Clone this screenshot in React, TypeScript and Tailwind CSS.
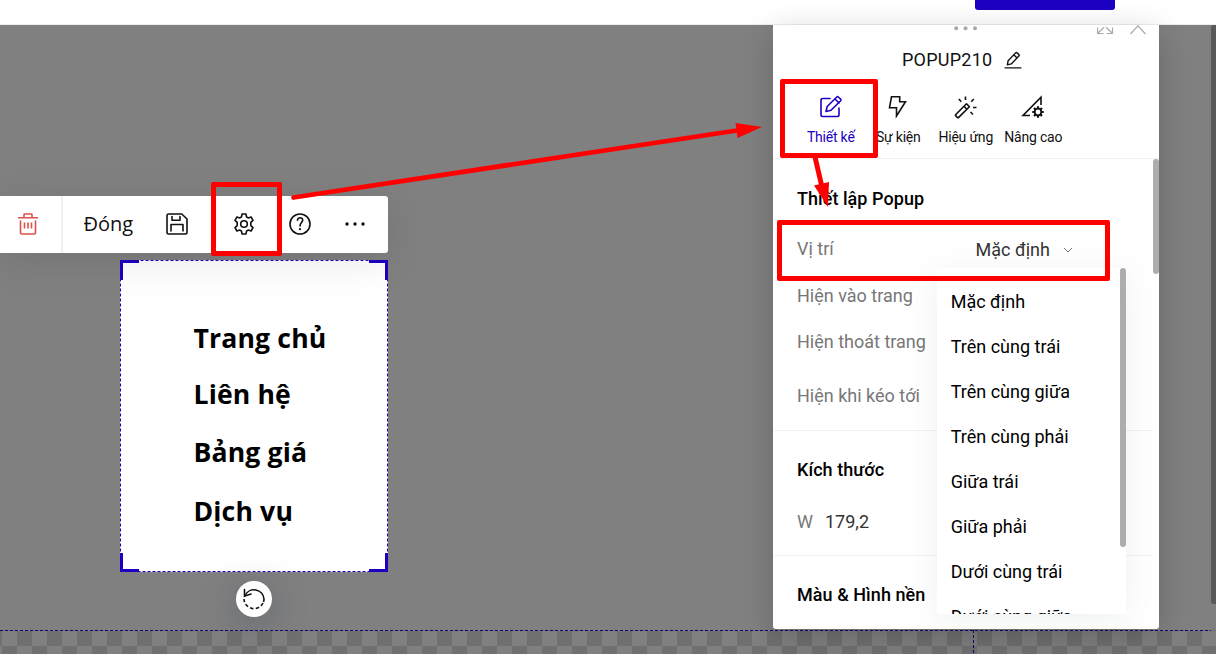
import React from "react";

type IconProps = { className?: string; children: React.ReactNode; box?: string };

function Icon({ className = "", children, box = "0 0 24 24" }: IconProps) {
  return (
    <svg viewBox={box} fill="none" stroke="currentColor" strokeWidth="1.6" strokeLinecap="round" strokeLinejoin="round" className={"shrink-0 " + className}>
      {children}
    </svg>
  );
}

const TrashIcon = () => (
  <Icon className="h-6 w-6 text-[#d9534a]">
    <path d="M2 5.800h20M8 5.500V2.600Q8 2 8.600 2h6.800q.6 0 .6.6v2.900M4.500 8.500v11.800q0 1.700 1.700 1.700h11.600q1.700 0 1.700-1.700V8.500M8.500 10.500v6M12 10.500v6M15.500 10.500v6" strokeLinecap="butt" />
  </Icon>
);

const SaveIcon = () => (
  <Icon className="h-6 w-6">
    <path d="M3.700 2h13.100L22 7v13.300q0 1.700-1.700 1.700H3.700Q2 22 2 20.300V3.700Q2 2 3.700 2ZM7 4.500v3.700h8V4.500M6 19v-6.500h12V19" />
  </Icon>
);

const GearIcon = () => (
  <Icon className="h-6 w-6">
    <path d="M10.100 2h3.800l.7 3 1.500.9 3-.9 1.900 3.300-2.200 2.100v3.200l2.200 2.100-1.900 3.300-3-.9-1.500.9-.7 3h-3.800l-.7-3-1.500-.9-3 .9L3 15.700l2.200-2.100v-3.200L3 8.300 4.900 5l3 .9L9.400 5Z" />
    <circle cx="12" cy="12" r="3.300" />
  </Icon>
);

const HelpIcon = () => (
  <Icon className="h-6 w-6">
    <circle cx="12" cy="12" r="10" />
    <path d="M9.500 8.300c0-3.400 5.200-3.400 5.200-.2 0 2.200-2.700 2.800-2.700 5.900" />
    <circle cx="12" cy="17.200" r="1.100" fill="currentColor" stroke="none" />
  </Icon>
);

const MoreIcon = () => (
  <Icon className="h-6 w-6">
    <g fill="currentColor" stroke="none">
      <circle cx="4" cy="12" r="1.700" />
      <circle cx="12" cy="12" r="1.700" />
      <circle cx="20" cy="12" r="1.700" />
    </g>
  </Icon>
);

const DesignIcon = () => (
  <Icon className="h-6 w-6">
    <path d="M11 3.500H3.700Q2 3.500 2 5.200v14.600q0 1.700 1.700 1.700h14.600q1.700 0 1.700-1.700V13M7 16.500l1.200-5L17.800 2q.7-.7 1.500 0L21.700 4.200q.7.8 0 1.500L12 15.300ZM16 4l4 4" />
  </Icon>
);

const BoltIcon = () => (
  <Icon className="h-6 w-6">
    <path d="M5.500 1.800h8.200V6.700H19.500L10.500 21v-8.300H3.500Z" strokeLinejoin="miter" />
  </Icon>
);

const WandIcon = () => (
  <Icon className="h-6 w-6">
    <path d="M1.800 19.500 12.500 8.800l2.900 2.900L4.700 22.400Q4 23 3.300 22.400l-1.500-1.500q-.7-.7 0-1.400ZM10 11.300l2.900 2.900M11.500 1.500V5M4.800 4l2.500 2.800M19.800 4l-2.500 2.800M19 12.500h3.500M16.500 17l2.500 2.500" strokeLinecap="butt" />
  </Icon>
);

const AdvancedIcon = () => (
  <Icon className="h-6 w-6">
    <path d="M20 10V2.200L2 20.500h7" strokeLinecap="butt" strokeLinejoin="miter" />
    <circle cx="17" cy="17" r="3.300" strokeWidth="1.800" />
    <path d="M17 11.300v2M17 20.700v2M11.300 17h2M20.700 17h2M13 13l1.400 1.400M19.600 19.600 21 21M21 13l-1.400 1.400M13 21l1.400-1.400" strokeWidth="2.200" strokeLinecap="butt" />
  </Icon>
);

const tabs = [
  { label: "Thiết kế", icon: <DesignIcon />, color: "text-[#1c00c2]" },
  { label: "Sự kiện", icon: <BoltIcon />, color: "text-[#111]" },
  { label: "Hiệu ứng", icon: <WandIcon />, color: "text-[#111]" },
  { label: "Nâng cao", icon: <AdvancedIcon />, color: "text-[#111]" },
];

const positions = ["Mặc định", "Trên cùng trái", "Trên cùng giữa", "Trên cùng phải", "Giữa trái", "Giữa phải", "Dưới cùng trái", "Dưới cùng giữa"];

function Toolbar() {
  return (
    <div className="absolute left-0 top-[171px] flex h-[57px] w-[388px] items-center rounded-r-[3px] bg-white pb-px text-[#111] shadow-[0_8px_40px_rgba(0,0,0,0.1)]">
      <div className="-mb-px flex h-[57px] w-[63px] items-center border-r-2 border-[#f0f0f0] pb-px pl-4">
        <TrashIcon />
      </div>
      <span className="w-[102px] pl-[20.500px] font-['Open_Sans',sans-serif] text-[20px]">Đóng</span>
      <div className="flex items-center">
        <SaveIcon />
        <span className="w-[43px]" />
        <GearIcon />
        <span className="w-8" />
        <HelpIcon />
        <span className="w-[31px]" />
        <MoreIcon />
      </div>
    </div>
  );
}

function Selection() {
  const links = [
    { text: "Trang chủ", height: "h-[56px]" },
    { text: "Liên hệ", height: "h-[58px]" },
    { text: "Bảng giá", height: "h-[59px]" },
    { text: "Dịch vụ", height: "h-[56px]" },
  ];
  return (
    <div className="absolute left-[120px] top-[235px] h-[312px] w-[268px] bg-white">
      <div className="h-full pl-[73.500px] pt-[58px] font-['Open_Sans',sans-serif] text-[26.600px] font-bold leading-[40px] tracking-[0.15px] text-black">
        {links.map((l) => (
          <div key={l.text} className={"whitespace-nowrap " + l.height}>{l.text}</div>
        ))}
      </div>
      <svg className="absolute inset-0" width="268" height="312" fill="none" stroke="#1c00c2">
        <rect x="0.500" y="0.500" width="267" height="311" stroke="#fff" />
        <rect x="0.500" y="0.500" width="267" height="311" strokeDasharray="3 2" />
        <path d="M1.500 20V1.500H19M249 1.500h17.500V20M266.500 293v17.500H249M19 310.500H1.500V293" strokeWidth="3" />
      </svg>
    </div>
  );
}

function RotateButton() {
  return (
    <div className="absolute left-[236px] top-[556px] flex h-9 w-9 items-center justify-center rounded-full bg-white text-[#111] shadow-[0_8px_36px_rgba(50,60,80,0.4)]">
      <Icon className="h-6 w-6">
        <path d="M3 8.500A10 10 0 0 1 22 12q0 1.500-.5 3" strokeLinecap="butt" />
        <path d="M21 16A10 10 0 0 1 2 12" strokeDasharray="3.500 2.300" strokeLinecap="butt" />
        <path d="M2.500 2.500v6.700L9 7" strokeLinejoin="miter" />
      </Icon>
    </div>
  );
}

function Dropdown() {
  return (
    <div className="absolute left-[164px] top-[243px] h-[346px] w-[189px] rounded-[3px] bg-white text-black shadow-[0_6px_32px_rgba(70,90,90,0.09)]">
      <div className="h-full overflow-hidden pl-[13.700px] pt-[11px]">
        {positions.map((p) => (
          <div key={p} className="flex h-[45px] items-center whitespace-nowrap">{p}</div>
        ))}
      </div>
      <div className="absolute right-0 top-0 h-[279px] w-[6px] rounded-full bg-[#adadad]" />
    </div>
  );
}

function Panel() {
  return (
    <div className="absolute left-[773px] top-0 h-[604px] w-[386px] rounded-b-[3px] bg-white font-['Roboto',sans-serif] text-[18px] text-[#111] shadow-[0_8px_32px_rgba(0,0,0,0.2)]">
      <div className="flex h-[14px] items-start text-[#a8a8a8]">
        <svg className="ml-[181px] h-[8px] w-[24px]" fill="currentColor">
          <circle cx="2.200" cy="3.200" r="2" />
          <circle cx="11.500" cy="3.200" r="2" />
          <circle cx="21" cy="3.200" r="2" />
        </svg>
        <svg className="ml-[119px] h-[10px] w-[17px]" fill="none" stroke="currentColor" strokeWidth="1.200">
          <path d="M.6 2.500V8.500H6.500M.8 8.300 7 2.300M15.500 2.500V8.500H9.500M15.300 8.300 9 2.300" />
        </svg>
        <svg className="ml-4 h-[10px] w-[17px]" fill="none" stroke="currentColor" strokeWidth="1.200">
          <path d="M.5 9 8 .8 15.500 9" />
        </svg>
      </div>
      <div className="flex h-10 items-center pl-[129px]">
        <span className="w-[102px] tracking-[0.25px]">POPUP210</span>
        <Icon className="mt-px h-[18px] w-[18px]">
          <path d="M1.500 22.500h21M4.500 18.500l1-5.500L15.500 2.500q1-1 2 0l2.300 2.200q1 1 0 2L9.700 17.200ZM13 5l4.400 4.300" strokeWidth="1.900" />
        </Icon>
      </div>
      <div className="flex h-[79px] pl-[24px] pt-4">
        {tabs.map((t) => (
          <div key={t.label} className={"flex w-[67.500px] flex-col items-center gap-[7px] whitespace-nowrap text-[14px] leading-[22px] tracking-[-0.2px] " + t.color}>
            {t.icon}
            <span>{t.label}</span>
          </div>
        ))}
      </div>
      <div className="flex h-[471px] justify-between border-t border-[#f0f0f0]">
        <div className="w-[380px]">
          <section className="h-[272px] border-b border-[#f0f0f0] pl-6 pt-[24px] text-[#777]">
            <h2 className="flex h-[30px] items-center font-medium tracking-[0.05px] text-black">Thiết lập Popup</h2>
            <div className="mt-[19px] flex h-[32px] items-center">
              <span className="w-[178.500px]">Vị trí</span>
              <span className="mt-0.5 text-[#333]">Mặc định</span>
              <svg className="ml-[13px] mt-[3px] h-[6px] w-[10px]" fill="none" stroke="#777">
                <path d="m1 1 4 4 4-4" />
              </svg>
            </div>
            <div className="mt-[15px] flex h-[32px] items-center">Hiện vào trang</div>
            <div className="mt-[14px] flex h-[32px] items-center">Hiện thoát trang</div>
            <div className="mt-[22px] flex h-[32px] items-center">Hiện khi kéo tới</div>
          </section>
          <section className="h-[125px] border-b border-[#f0f0f0] pl-6 pt-[23px]">
            <h2 className="flex h-[30px] items-center font-medium tracking-[0.05px] text-black">Kích thước</h2>
            <div className="mt-[22px] flex h-[30px] items-center">
              <span className="w-[28px] text-[#777]">W</span>
              <span className="text-[#333]">179,2</span>
            </div>
          </section>
          <h2 className="mt-[23px] flex h-[30px] items-center pl-6 font-medium tracking-[0.05px] text-black">Màu &amp; Hình nền</h2>
        </div>
        <div className="h-[115px] w-[6px] rounded-full bg-[#adadad]" />
      </div>
      <Dropdown />
    </div>
  );
}

function Annotations() {
  return (
    <>
      <div className="absolute left-[780px] top-[79px] h-[79px] w-[98px] rounded-[2px] border-[5px] border-[#f00]" />
      <div className="absolute left-[777px] top-[220px] h-[61px] w-[333px] rounded-[2px] border-[5px] border-[#f00]" />
      <div className="absolute left-[211px] top-[182px] h-[74px] w-[71px] rounded-[2px] border-[5px] border-[#f00]" />
      <svg className="pointer-events-none absolute inset-0" width="1216" height="654" fill="#f00" stroke="#f00">
        <path d="M293.500 197.500 740 130" strokeWidth="4.800" strokeLinecap="round" />
        <path d="M735.500 123 762 127l-24.500 11Z" stroke="none" />
        <path d="M815 157l7 30" strokeWidth="5" />
        <path d="M814 185.500 829 182l-1 25Z" stroke="none" />
      </svg>
    </>
  );
}

export default function App() {
  return (
    <div className="relative flex h-[654px] w-[1216px] flex-col overflow-hidden bg-[#808080]">
      <header className="flex h-[25px] shrink-0 justify-end border-b border-[#eee] bg-white pr-[101px]">
        <div className="h-[10px] w-[140px] rounded-b-[3px] bg-[#1c00c2]" />
      </header>
      <main className="relative flex flex-1 flex-col">
        <div className="h-[605px]" />
        <div className="flex-1 bg-[conic-gradient(#808080_25%,#707070_0_50%,#808080_0_75%,#707070_0)] bg-size-[30px_30px] bg-position-[17px_1px]" />
        <svg className="absolute inset-0" width="1216" height="629" fill="none" stroke="#120078">
          <path d="M0 605.500h1211" strokeDasharray="3 2" />
          <path d="M973.500 605v24" strokeDasharray="3 2" />
        </svg>
        <Selection />
        <Toolbar />
        <RotateButton />
        <Panel />
        <div className="absolute right-0 top-0 h-[579px] w-[5px] rounded-l-[3px] bg-[#595959]" />
      </main>
      <Annotations />
    </div>
  );
}
